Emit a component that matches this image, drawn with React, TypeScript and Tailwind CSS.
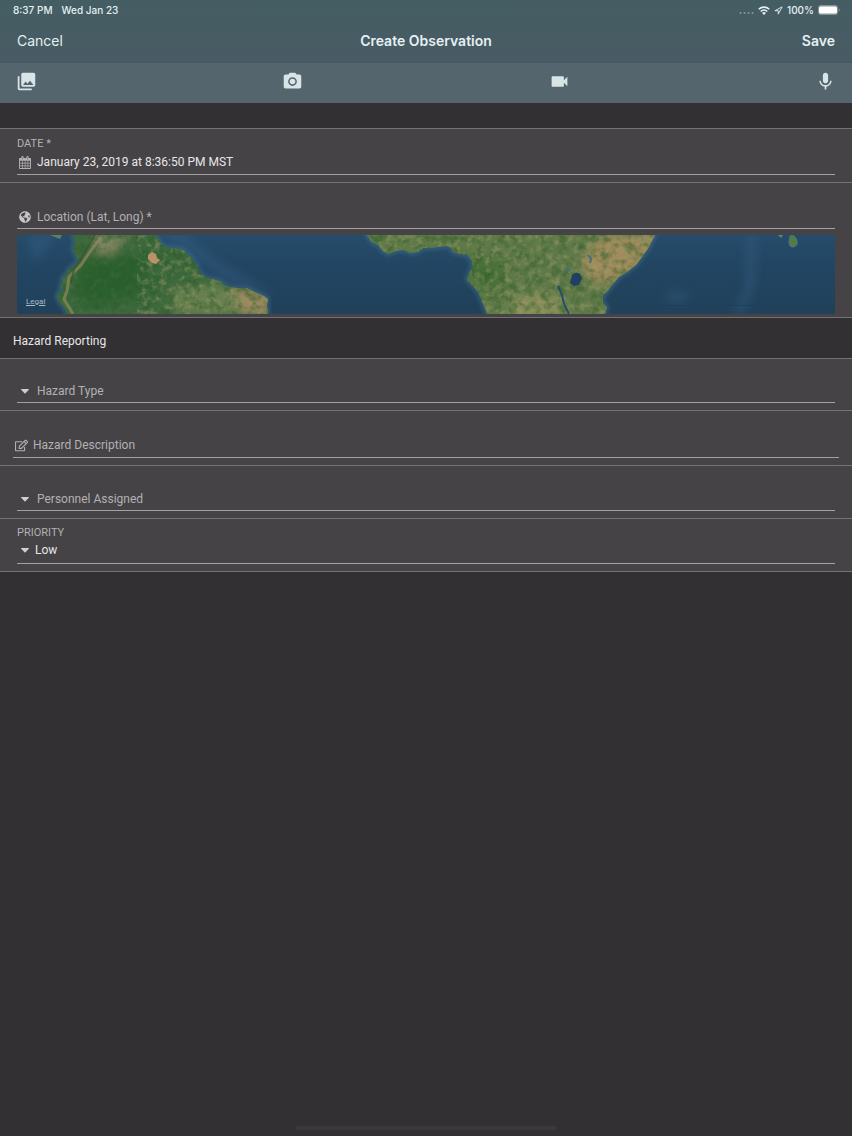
import React, { useState } from 'react';
import { MdCameraAlt, MdMic, MdPhotoLibrary, MdVideocam } from 'react-icons/md';
import { FaGlobeAmericas, FaRegEdit } from 'react-icons/fa';

const attachments = [
  { name: 'Add photo from gallery', icon: MdPhotoLibrary },
  { name: 'Take photo', icon: MdCameraAlt },
  { name: 'Record video', icon: MdVideocam },
  { name: 'Record audio', icon: MdMic },
];

function CalendarIcon() {
  return (
    <svg viewBox="0 0 26 28" className="h-[13px] w-3" aria-hidden="true">
      <path
        fill="currentColor"
        fillRule="evenodd"
        d="M2 4h3V2.500a2.500 2.500 0 0 1 5 0V4h6V2.500a2.500 2.500 0 0 1 5 0V4h3a2 2 0 0 1 2 2v20a2 2 0 0 1-2 2H2a2 2 0 0 1-2-2V6a2 2 0 0 1 2-2ZM2 10v4.500h4.500V10ZM8 10v4.500h4.500V10ZM14 10v4.500h4.500V10ZM20 10v4.500H24V10ZM2 16v4.500h4.500v-4.500ZM8 16v4.500h4.500v-4.500ZM14 16v4.500h4.500v-4.500ZM20 16v4.500H24v-4.500ZM2 22V26h4.500v-4ZM8 22V26h4.500v-4ZM14 22V26h4.500v-4ZM20 22V26H24v-4ZM7 2.500V7h1V2.500ZM18 2.500V7h1V2.500Z"
      />
    </svg>
  );
}

function CaretIcon() {
  return (
    <svg viewBox="0 0 8 5" className="h-[5px] w-2" fill="currentColor" aria-hidden="true">
      <path d="M.5 0h7q.8.100.3.800L4.500 4.300q-.5.400-1 0L.2.800Q-.3.100.5 0Z" />
    </svg>
  );
}

function StatusBar() {
  return (
    <div className="flex h-5 items-center justify-between pr-3 pl-[13px] text-[10px] leading-5 font-medium">
      <div className="flex gap-[9px]">
        <span>8:37 PM</span>
        <span>Wed Jan 23</span>
      </div>
      <div className="flex items-center gap-1">
        <svg viewBox="0 0 15 12" className="h-3 w-[15px] opacity-40" fill="currentColor" aria-hidden="true">
          <circle cx="1.500" cy="9" r="1" />
          <circle cx="5.500" cy="9" r="1" />
          <circle cx="9.500" cy="9" r="1" />
          <circle cx="13.500" cy="9" r="1" />
        </svg>
        <svg viewBox="0 0 24 18" className="h-[9px] w-3" fill="none" stroke="currentColor" strokeWidth="3.400" aria-hidden="true">
          <path d="M1.500 6.500a15 15 0 0 1 21 0" />
          <path d="M5.500 11a9.300 9.300 0 0 1 13 0" />
          <path d="M12 17.800 8.300 14a5.300 5.300 0 0 1 7.400 0Z" fill="currentColor" stroke="none" />
        </svg>
        <svg viewBox="0 0 20 20" className="size-[9px]" fill="none" stroke="currentColor" strokeWidth="2" strokeLinejoin="round" aria-hidden="true">
          <path d="M18 2 2 10.500h7.500V18Z" />
        </svg>
        <span>100%</span>
        <svg viewBox="0 0 22 10" className="h-2.5 w-[22px]" aria-hidden="true">
          <rect width="20" height="10" rx="3" fill="#839297" />
          <rect x="1" y="1.500" width="18" height="7" rx="1.500" fill="#fff" />
          <path d="M20.700 3.300v3.400q1.200-.5 1.200-1.700t-1.200-1.700Z" fill="#839297" />
        </svg>
      </div>
    </div>
  );
}

// Satellite strip along the equator, clipped to the land outlines
function LocationMap() {
  return (
    <div className="relative mt-1.5">
      <svg viewBox="0 0 818 79" preserveAspectRatio="none" className="block h-[79px] w-full" role="img" aria-label="Map">
        <defs>
          <filter id="terrain" x="0" y="0" width="100%" height="100%" colorInterpolationFilters="sRGB">
            <feTurbulence type="fractalNoise" baseFrequency="0.16" numOctaves="4" seed="8" />
            <feColorMatrix values="0 0 0 0 0.64  0 0 0 0 0.62  0 0 0 0 0.43  3 1 0 0 -1.9" />
          </filter>
          <filter id="forest" x="0" y="0" width="100%" height="100%" colorInterpolationFilters="sRGB">
            <feTurbulence type="fractalNoise" baseFrequency="0.12" numOctaves="4" seed="3" />
            <feColorMatrix values="0 0 0 0 0.17  0 0 0 0 0.36  0 0 0 0 0.17  0 3 1 0 -1.8" />
          </filter>
          <filter id="soft" x="-20%" y="-20%" width="140%" height="140%">
            <feGaussianBlur stdDeviation="5" />
          </filter>
          <filter id="shelf" x="-20%" y="-20%" width="140%" height="140%">
            <feGaussianBlur stdDeviation="2" />
          </filter>
          <linearGradient id="ocean" x1="0" y1="0" x2="0" y2="1">
            <stop offset="0" stopColor="#264c6b" />
            <stop offset="0.4" stopColor="#224562" />
            <stop offset="1" stopColor="#21415a" />
          </linearGradient>
          <path id="america" d="M56 0 58 6 56 15 60 22 61 27 56 31 51 35 50 39 45 43 46 47 43 52 46 55 46 57 41 58 40 62 43 68 47 72 50 79H251L250 70 251 64 247 61 240 58 230 53 221 53 213 52 206 50 205 47 200 45 191 43 183 38 180 30 175 23 170 18 164 14 156 13 146 11 142 5 138 0Z" />
          <path id="africa" d="M350 0 355 7 361 10 366 16 371 19 379 16 386 15 393 18 401 17 406 13 413 13 421 12 430 11 434 13 436 17 443 19 451 20 455 26 455 34 452 39 450 45 456 51 461 57 465 66 470 79H588L590 72 586 68 586 60 591 56 595 50 602 42 610 37 619 30 625 22 632 12 638 0Z" />
          <clipPath id="land">
            <use href="#america" />
            <use href="#africa" />
          </clipPath>
        </defs>
        <rect width="818" height="79" fill="url(#ocean)" />
        <g filter="url(#soft)" fill="#3a658a" opacity="0.35">
          <path d="M138-5 205 45 260 60 200 25 165-5Z" />
          <path d="M730 0h10l-2 50-12 30h-9l11-30Z" />
          <ellipse cx="660" cy="62" rx="12" ry="6" />
          <path d="M10 0h30L18 30Z" />
        </g>
        <path d="M0 70.500H818" stroke="#1c3c5a" strokeWidth="1" opacity="0.5" />
        <g fill="none" stroke="#4a7a92" strokeWidth="3" opacity="0.7" filter="url(#shelf)">
          <use href="#america" />
          <use href="#africa" />
        </g>
        <g clipPath="url(#land)">
          <rect width="300" height="79" fill="#3b683c" />
          <rect x="300" width="350" height="79" fill="#5f7a48" />
          <g filter="url(#soft)">
            <path d="M75 0h40L95 20 78 25Z" fill="#7f8560" />
            <path d="M70 18 130 22 125 60 80 72 55 60Z" fill="#2c602f" />
            <path d="M150 55 200 50 250 55V80H160Z" fill="#688050" />
            <path d="M215 50 255 60V80H225Z" fill="#9b885e" />
            <path d="M585 0H650L610 45 580 50 560 30Z" fill="#a08c5c" />
            <path d="M450 20 490 30 480 60 455 45Z" fill="#466f38" />
            <path d="M500 60H545V80H490Z" fill="#8a8f5a" />
          </g>
          <rect width="818" height="79" filter="url(#forest)" opacity="0.5" />
          <rect x="120" width="698" height="79" filter="url(#terrain)" opacity="0.45" />
          <rect width="120" height="79" filter="url(#terrain)" opacity="0.1" />
          <path d="M84 2 72 18 64 30 52 42 50 56 47 64 56 79" fill="none" stroke="#9a8a5f" strokeWidth="3" opacity="0.65" />
          <path d="M78 0 66 20 57 34 54 48" fill="none" stroke="#37562f" strokeWidth="2" opacity="0.7" />
          <path d="M131 20l4-3 4 2 1 4 3 2-4 4-4-1-4-4Z" fill="#b99367" />
        </g>
        <path d="M555 40q4-4 8-1l2 4-3 7-5 1-4-3Z" fill="#213f63" />
        <path d="M541 51l4 9 2 9 5 10" fill="none" stroke="#2a4b68" strokeWidth="2" />
        <path d="m571 20 3 4-1 4m-20 6-5 2" fill="none" stroke="#466f7c" strokeWidth="2" />
        <path d="M33 0h12l-2 4-5-2Z" fill="#5f8060" />
        <path d="M773 1q5-2 7 5 1 5-4 6-4 0-4-5Z" fill="#557b42" stroke="#4a7a82" />
        <path d="M761 0h5l-2 3Z" fill="#64846c" />
      </svg>
      <a href="#legal" className="absolute bottom-1.5 left-[9px] text-[8px] leading-3 text-[#a9b8c2] underline">
        Legal
      </a>
    </div>
  );
}

const rowClass = 'border-t border-[#737174] bg-[#454346] px-[17px]';
const fieldClass = 'flex h-[23px] items-center border-b border-[#a3a1a4]';
const inputClass = 'min-w-0 flex-1 appearance-none bg-transparent text-[12px] leading-4 outline-none placeholder:text-[#b3b1b4]';

export default function App() {
  const [date, setDate] = useState('January 23, 2019 at 8:36:50 PM MST');
  const [location, setLocation] = useState('');
  const [hazardType, setHazardType] = useState('');
  const [description, setDescription] = useState('');
  const [personnel, setPersonnel] = useState('');
  const [priority, setPriority] = useState('Low');

  return (
    <div className="flex min-h-screen flex-col bg-[#323032] font-['Inter','Liberation_Sans',sans-serif] text-[#e8e6e8]">
      <header className="bg-linear-to-b from-[#445d63] to-[#495b64] text-[#e4f0f2]">
        <StatusBar />
        <div className="grid h-[42px] grid-cols-3 items-center px-[17px] text-[14px] leading-5">
          <button type="button" className="justify-self-start">Cancel</button>
          <h1 className="text-center font-semibold">Create Observation</h1>
          <button type="button" className="justify-self-end font-semibold">Save</button>
        </div>
      </header>
      <div className="flex h-[41px] items-center justify-between border-t border-[#455860] bg-[#54656d] px-4 pb-[3px] text-[#d9e4e7]">
        {attachments.map((item) => {
          const Icon = item.icon;
          return (
            <button key={item.name} type="button" aria-label={item.name}>
              <Icon size={21} />
            </button>
          );
        })}
      </div>

      <form className="mt-[25px] font-['Roboto','Liberation_Sans',sans-serif]">
        <div className={`${rowClass} pt-[7px] pb-[7px]`}>
          <label htmlFor="date" className="block text-[11px] leading-4 text-[#b3b1b4]">DATE *</label>
          <div className={`${fieldClass} pb-0.5`}>
            <span className="flex w-5 pl-0.5 text-[#b3b1b4]"><CalendarIcon /></span>
            <input id="date" className={inputClass} value={date} onChange={(e) => setDate(e.target.value)} />
          </div>
        </div>

        <div className={`${rowClass} pt-[23px] pb-[3px]`}>
          <div className={fieldClass}>
            <span className="flex w-5 pl-0.5 text-[#c6c4c7]"><FaGlobeAmericas size={12} /></span>
            <input aria-label="Location" placeholder="Location (Lat, Long) *" className={inputClass} value={location} onChange={(e) => setLocation(e.target.value)} />
          </div>
          <LocationMap />
        </div>

        <h2 className="border-t border-[#737174] px-[13px] pt-[13px] pb-[7px] text-[12px] leading-5">Hazard Reporting</h2>

        <div className={`${rowClass} pt-[21px] pb-[7px]`}>
          <div className={fieldClass}>
            <span className="flex w-5 pl-1 text-[#d0ced1]"><CaretIcon /></span>
            <select aria-label="Hazard Type" className={`${inputClass} text-[#b3b1b4]`} value={hazardType} onChange={(e) => setHazardType(e.target.value)}>
              <option value="">Hazard Type</option>
            </select>
          </div>
        </div>

        <div className="border-t border-[#737174] bg-[#454346] px-[13px] pt-6 pb-[7px]">
          <div className={`${fieldClass} pb-0.5`}>
            <span className="flex w-5 pl-0.5 text-[#b3b1b4]"><FaRegEdit size={13} /></span>
            <input aria-label="Hazard Description" placeholder="Hazard Description" className={inputClass} value={description} onChange={(e) => setDescription(e.target.value)} />
          </div>
        </div>

        <div className={`${rowClass} pt-[22px] pb-[7px]`}>
          <div className={fieldClass}>
            <span className="flex w-5 pl-1 text-[#d0ced1]"><CaretIcon /></span>
            <select aria-label="Personnel Assigned" className={`${inputClass} text-[#b3b1b4]`} value={personnel} onChange={(e) => setPersonnel(e.target.value)}>
              <option value="">Personnel Assigned</option>
            </select>
          </div>
        </div>

        <div className={`${rowClass} border-b pt-1.5 pb-[7px]`}>
          <label htmlFor="priority" className="block text-[11px] leading-4 text-[#b3b1b4]">PRIORITY</label>
          <div className={`${fieldClass} pb-1`}>
            <span className="flex w-[18px] pl-1 text-[#d0ced1]"><CaretIcon /></span>
            <select id="priority" className={inputClass} value={priority} onChange={(e) => setPriority(e.target.value)}>
              <option>Low</option>
              <option>Medium</option>
              <option>High</option>
            </select>
          </div>
        </div>
      </form>

      <div className="mx-auto mt-auto mb-1.5 h-1 w-[260px] rounded-full bg-[#3b393b]" />
    </div>
  );
}
